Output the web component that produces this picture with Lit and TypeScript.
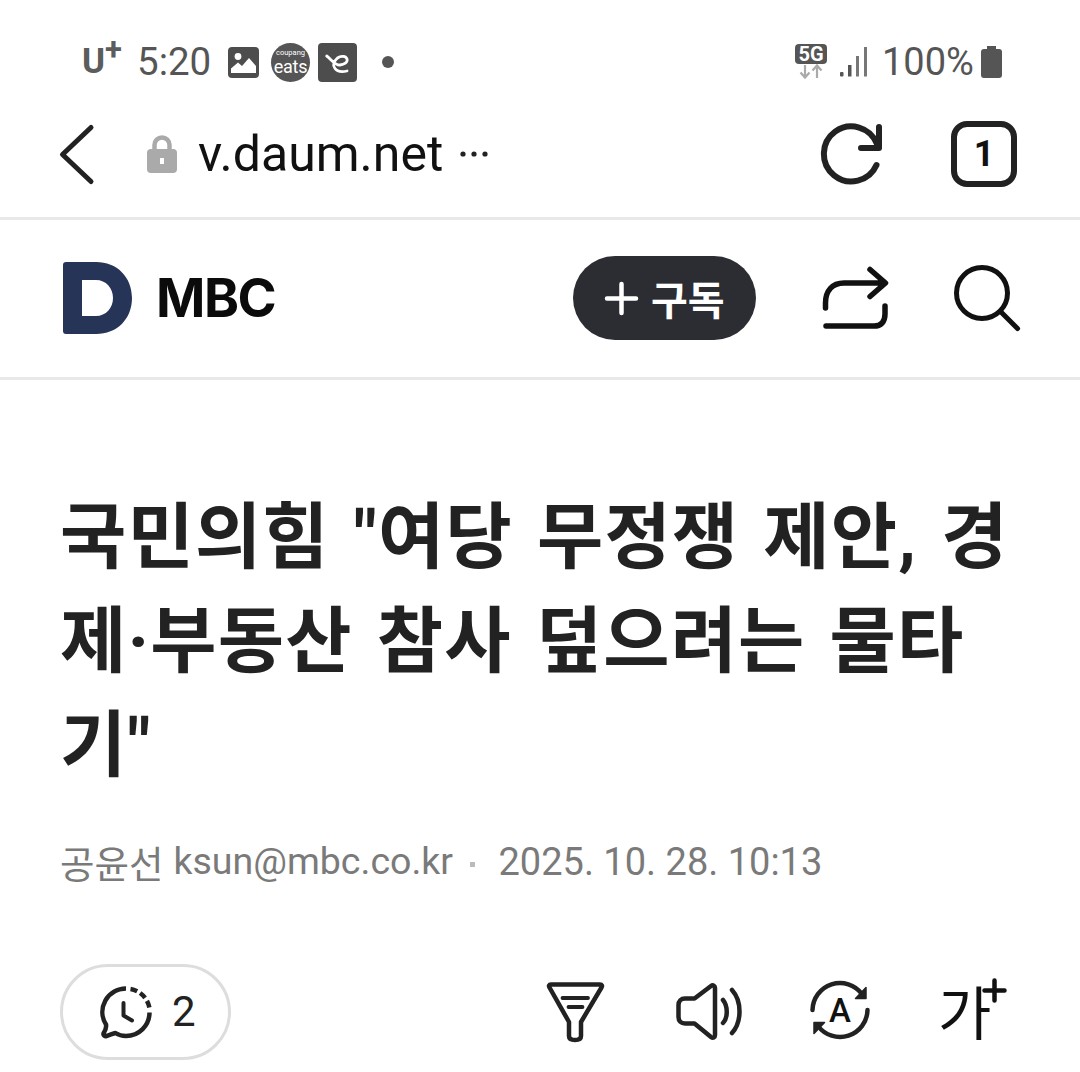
import { LitElement, html, css } from "lit";
import { customElement } from "lit/decorators.js";

@customElement("app-root")
export class AppRoot extends LitElement {
  static styles = css`
    :host { display: block; width: 1080px; height: 1072px; overflow: hidden; background: #fff; font-family: Roboto, "Noto Sans CJK KR", sans-serif; color: #111; }
    svg { display: block; flex: none; overflow: visible; }
    .status { box-sizing: border-box; height: 108px; padding: 16px 78px 0 82px; display: flex; align-items: center; justify-content: space-between; color: #555; }
    .group { display: flex; align-items: center; }
    .carrier { font-size: 35px; font-weight: 700; width: 55px; height: 36px; line-height: 36px; display: flex; align-items: flex-start; color: #5c5c5c; }
    .carrier span { font-size: 31px; line-height: 31px; margin: -10px 0 0 0; }
    .time { font-size: 38.500px; width: 91px; line-height: 1; }
    .notif { width: 31px; height: 31px; margin-right: 12px; }
    .eats { box-sizing: border-box; width: 39px; height: 39px; margin-right: 8px; border-radius: 50%; background: #555; color: #fff; display: flex; flex-direction: column; align-items: center; justify-content: center; font-size: 18px; line-height: 20px; letter-spacing: -0.300px; }
    .eats small { font-size: 7.500px; line-height: 9px; letter-spacing: 0; }
    .eapp { width: 39px; height: 39px; margin-right: 25px; }
    .dot { width: 12px; height: 12px; border-radius: 50%; background: #555; }
    .net { width: 32px; height: 36px; margin-right: 13px; }
    .fiveg { position: relative; }
    .fiveg span { position: absolute; left: 0; top: 0; width: 32px; height: 20px; background: #555; border-radius: 4px; color: #fff; font-size: 20px; font-weight: 700; line-height: 20px; text-align: center; }
    .signal { width: 28px; height: 30px; margin-right: 14px; }
    .pct { font-size: 38px; width: 99px; line-height: 1; }
    .batt { width: 21px; height: 32px; }
    .browser { box-sizing: border-box; height: 112px; padding: 0 63px 17px 60px; border-bottom: 3px solid #e9e9e9; display: flex; align-items: center; }
    .back { width: 33px; height: 59px; margin-right: 54px; }
    .lock { width: 30px; height: 38px; margin-right: 21px; }
    .url { font-size: 50px; line-height: 1; width: 262px; color: #111; }
    .more { width: 28px; height: 6px; margin-right: auto; }
    .reload { width: 60px; height: 60px; margin-right: 69px; }
    .tabs { box-sizing: border-box; width: 66px; height: 66px; border: 6px solid #222; border-radius: 16px; display: flex; align-items: center; justify-content: center; font-size: 36px; font-weight: 700; line-height: 1; }
    .header { box-sizing: border-box; height: 160px; padding: 0 60px 1px 63px; border-bottom: 3px solid #e9e9e9; display: flex; align-items: center; }
    .logo { width: 69px; height: 72px; margin-right: 24px; }
    .brand { font-family: Inter, sans-serif; font-size: 53px; font-weight: 700; letter-spacing: -1.500px; line-height: 1; color: #0b0b0b; width: 399px; margin-right: 18px; }
    .sub { box-sizing: border-box; width: 183px; height: 84px; border-radius: 42px; background: #2c2d33; color: #fff; display: flex; align-items: center; padding-left: 32px; margin-right: 67px; }
    .sub svg { width: 33px; height: 33px; margin-right: 13px; }
    .sub span { font-family: "Noto Sans CJK KR", sans-serif; font-size: 40px; font-weight: 700; line-height: 1; }
    .share { width: 64px; height: 62px; margin-right: 67px; }
    .search { width: 66px; height: 66px; }
    .title { margin: 0; padding: 106px 60px 0 60px; font-family: Roboto, "Noto Sans CJK KR", sans-serif; font-size: 72px; font-weight: 700; line-height: 104px; color: #222; letter-spacing: 1.200px; word-spacing: 5px; word-break: break-all; height: 311px; }
    .meta { margin-top: 39px; padding-left: 60px; height: 52px; display: flex; align-items: center; font-size: 37.500px; color: #7a7a7a; line-height: 1; white-space: nowrap; }
    .name { font-family: "Noto Sans CJK KR", sans-serif; margin-right: 10px; }
    .mail { width: 280px; }
    .sep { width: 5px; height: 5px; background: #bbb; margin: 4px 24px 0 16px; }
    .date { font-size: 38px; }
    .tools { margin-top: 76px; padding: 0 60px; display: flex; align-items: flex-start; }
    .pill { box-sizing: border-box; width: 171px; height: 96px; border: 3px solid #ddd; border-radius: 48px; display: flex; align-items: center; padding-left: 37px; margin-right: 316px; }
    .pill svg { width: 52px; height: 53px; margin-right: 20px; }
    .pill span { font-size: 42px; line-height: 1; color: #222; }
    .t1 { width: 57px; height: 60px; margin: 18px 72px 0 0; }
    .t2 { width: 66px; height: 57px; margin: 19px 68px 0 0; }
    .t3 { position: relative; width: 60px; height: 59px; margin: 17px 71px 0 0; }
    .t3 span { position: absolute; left: 0; right: 0; top: 13px; text-align: center; font-size: 33px; line-height: 34px; font-weight: 500; color: #111; }
    .t4 { position: relative; width: 66px; height: 60px; margin-top: 15px; }
    .t4 span { position: absolute; left: -3px; top: 0; font-family: "Noto Sans CJK KR", sans-serif; font-size: 58px; font-weight: 400; line-height: 62px; color: #111; }
    .t4 svg { position: absolute; left: 42px; top: 0; width: 23px; height: 23px; }
  `;

  render() {
    return html`
      <div class="status">
        <div class="group">
          <div class="carrier">U<span>+</span></div>
          <div class="time">5:20</div>
          <svg class="notif" viewBox="0 0 31 31"><rect width="31" height="31" rx="4" fill="#4d4d4d"/><circle cx="10" cy="9.500" r="3.400" fill="#fff"/><path d="M3 26V21.500L10 15.500L14 19L21 11L28 19V26Z" fill="#fff"/></svg>
          <div class="eats"><small>coupang</small><span>eats</span></div>
          <svg class="eapp" viewBox="0 0 39 39"><rect width="39" height="39" rx="4" fill="#4d4d4d"/><path d="M8.700 13C13 16 17 22.500 22 22C26 21.500 30 19.500 29 16C28 13 23 12.500 19.500 15C16 18 14.500 22 17 25.500C19 28.500 24 29 29 28" fill="none" stroke="#fff" stroke-width="2.800" stroke-linecap="round"/></svg>
          <div class="dot"></div>
        </div>
        <div class="group">
          <div class="net fiveg">
            <span>5G</span>
            <svg width="32" height="36" viewBox="0 0 32 36"><path d="M10 21V33M5.500 28.500L10 33.500L14.500 28.500M22 34V22M17.500 26.500L22 21.500L26.500 26.500" fill="none" stroke="#aaa" stroke-width="2.200"/></svg>
          </div>
          <svg class="signal" viewBox="0 0 28 30"><g fill="#555"><rect x="0" y="25" width="3.500" height="4.500" rx="1"/><rect x="8" y="18" width="3.500" height="11.500"/><rect x="16" y="9" width="3" height="20.500" fill="#777"/><rect x="24" y="0" width="3" height="29.500" fill="#777"/></g></svg>
          <div class="pct">100%</div>
          <svg class="batt" viewBox="0 0 21 32"><path d="M6 0H15V3H18A3 3 0 0 1 21 6V29A3 3 0 0 1 18 32H3A3 3 0 0 1 0 29V6A3 3 0 0 1 3 3H6Z" fill="#555"/></svg>
        </div>
      </div>

      <div class="browser">
        <svg class="back" viewBox="0 0 33 59"><path d="M31 2.500L2.500 29.500L31 56.500" fill="none" stroke="#222" stroke-width="5" stroke-linecap="round" stroke-linejoin="round"/></svg>
        <svg class="lock" viewBox="0 0 30 38"><path d="M7.500 15V10A7.500 7.500 0 0 1 22.500 10V15" fill="none" stroke="#aaa" stroke-width="4.500"/><rect y="14" width="30" height="24" rx="4" fill="#aaa"/><rect x="13" y="23" width="4" height="6" fill="#fff"/></svg>
        <div class="url">v.daum.net</div>
        <svg class="more" viewBox="0 0 28 6"><g fill="#222"><circle cx="3" cy="3" r="2.600"/><circle cx="14" cy="3" r="2.600"/><circle cx="25" cy="3" r="2.600"/></g></svg>
        <svg class="reload" viewBox="0 0 60 60"><path d="M54.500 41A27.500 27.500 0 1 1 55 20" fill="none" stroke="#222" stroke-width="6" stroke-linecap="round"/><path d="M57 3V24H39" fill="none" stroke="#222" stroke-width="6" stroke-linecap="round" stroke-linejoin="round"/></svg>
        <div class="tabs">1</div>
      </div>

      <div class="header">
        <svg class="logo" viewBox="0 0 69 72"><path fill-rule="evenodd" d="M3 0H33C54 0 69 15 69 36C69 57 54 72 33 72H3A3 3 0 0 1 0 69V3A3 3 0 0 1 3 0ZM19 18V54H33C43 54 50 46 50 36C50 26 43 18 33 18Z" fill="#263557"/></svg>
        <div class="brand">MBC</div>
        <div class="sub">
          <svg viewBox="0 0 33 33"><path d="M2 16.500H31M16.500 2V31" stroke="#fff" stroke-width="4.500" stroke-linecap="round"/></svg>
          <span>구독</span>
        </div>
        <svg class="share" viewBox="0 0 64 62"><path d="M2.500 41V36C2.500 24 9 16 21 16H62M47 2.500L62.500 16L47 29.500M62 39V47C62 55 58 59 51 59H3" fill="none" stroke="#111" stroke-width="5.500" stroke-linecap="round" stroke-linejoin="round"/></svg>
        <svg class="search" viewBox="0 0 66 66"><circle cx="28" cy="28" r="25.500" fill="none" stroke="#111" stroke-width="5"/><path d="M47 47L63.500 63.500" stroke="#111" stroke-width="5" stroke-linecap="round"/></svg>
      </div>

      <h1 class="title">국민의힘 "여당 무정쟁 제안, 경제·부동산 참사 덮으려는 물타기"</h1>

      <div class="meta">
        <span class="name">공윤선</span><span class="mail">ksun@mbc.co.kr</span><span class="sep"></span><span class="date">2025. 10. 28. 10:13</span>
      </div>

      <div class="tools">
        <div class="pill">
          <svg viewBox="0 0 52 53"><path d="M26 2.500A23.500 23.500 0 0 0 6 38.500C6.500 41 5 45 3.500 47.500C3 49.500 5 50.500 6.500 50C10 49 13 47.500 15.500 47C18.500 49 22 50 26 50C39 50 49.500 39.500 49.500 26.500" fill="none" stroke="#222" stroke-width="4.500" stroke-linejoin="round"/><path d="M30.500 3C40 4.500 47.500 12 49.500 22" fill="none" stroke="#222" stroke-width="4.500" stroke-dasharray="7 3.500"/><path d="M23.500 17V29.500L32 34.500" fill="none" stroke="#222" stroke-width="4" stroke-linecap="round" stroke-linejoin="round"/></svg>
          <span>2</span>
        </div>
        <svg class="t1" viewBox="0 0 57 60"><path d="M4 2.500H53C55 2.500 55.500 4 54.500 5.500L34 40V54C34 56.500 32 58 28 58C24 58 22 56.500 22 54V40L2.500 5.500C1.500 4 2 2.500 4 2.500Z" fill="none" stroke="#222" stroke-width="4.500" stroke-linejoin="round"/><path d="M15.500 16H41M21.500 25H35.500" stroke="#222" stroke-width="3.800" stroke-linecap="round"/></svg>
        <svg class="t2" viewBox="0 0 66 57"><path d="M35 3C37 1.500 39 3 39 5V52C39 54.500 37 55.500 35 54L18.500 40.500H9C5 40.500 2.500 38 2.500 34V22C2.500 18 5 15.500 9 15.500H18.500Z" fill="none" stroke="#222" stroke-width="4.500" stroke-linejoin="round"/><path d="M47 17C52 23 52 35 47 40M56 7C66 18 66 39 56 50" fill="none" stroke="#222" stroke-width="4.500" stroke-linecap="round"/></svg>
        <div class="t3">
          <svg width="60" height="59" viewBox="0 0 60 59"><path d="M2.500 29A27.500 27.500 0 0 1 52 13M57.500 29A27.500 27.500 0 0 1 8 45" fill="none" stroke="#222" stroke-width="4.500" stroke-linecap="round"/><path d="M56 6.500V17.500H45.500Z" fill="#222" stroke="#222" stroke-width="1.500" stroke-linejoin="round"/><path d="M4 52.500V41.500H14.500Z" fill="#222" stroke="#222" stroke-width="1.500" stroke-linejoin="round"/></svg>
          <span>A</span>
        </div>
        <div class="t4">
          <span>가</span>
          <svg viewBox="0 0 23 23"><path d="M1.500 11.500H21.500M11.500 1.500V21.500" stroke="#111" stroke-width="4.500" stroke-linecap="round"/></svg>
        </div>
      </div>
    `;
  }
}
